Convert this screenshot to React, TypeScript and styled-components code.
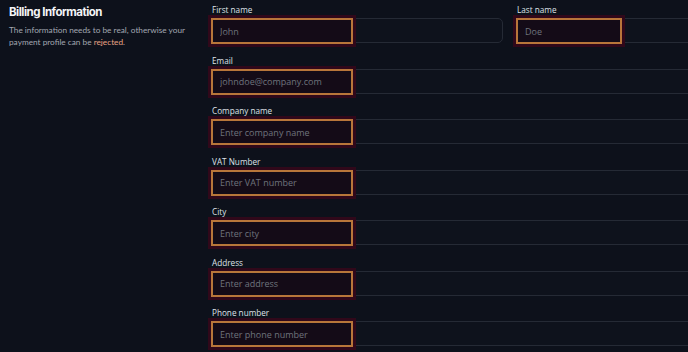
import React from 'react';
import styled, { createGlobalStyle } from 'styled-components';

const GlobalStyle = createGlobalStyle`
  html, body {
    margin: 0;
    padding: 0;
    background: #0d111b;
    overflow: hidden;
  }
  body {
    font-family: Inter, "Noto Sans", sans-serif;
    color: #e7e9ee;
  }
`;

const Page = styled.div`
  display: grid;
  grid-template-columns: 211px 597px;
  width: 808px;
  height: 352px;
`;

const Intro = styled.div`
  padding: 5px 0 0 9px;
`;

const Title = styled.h2`
  margin: 0 0 4px;
  font-size: 11.5px;
  line-height: 15px;
  font-weight: 700;
  letter-spacing: -0.5px;
  color: #f4f5f7;
`;

const Description = styled.p`
  margin: 0;
  width: 180px;
  font-family: Lato, "Open Sans", sans-serif;
  font-size: 8.25px;
  line-height: 12px;
  color: #a2a7b1;
`;

const Warning = styled.span`
  color: #e9a283;
`;

const Form = styled.div`
  display: flex;
  flex-direction: column;
  gap: 11.5px;
  padding-top: 4px;
`;

const Row = styled.div`
  display: grid;
  grid-template-columns: 1fr 1fr;
  column-gap: 13px;
`;

const Field = styled.label<{ $full?: boolean }>`
  display: flex;
  flex-direction: column;
  gap: 3px;
  grid-column: ${({ $full }) => ($full ? '1 / -1' : 'auto')};
`;

const Label = styled.span`
  padding-left: 1px;
  font-family: "Open Sans", Inter, sans-serif;
  font-size: 8.2px;
  line-height: 11px;
  font-weight: 500;
  color: #dfe2e8;
`;

const Box = styled.div`
  position: relative;
  height: 25px;
  border: 1px solid #252a35;
  border-radius: 5px;
  background: #0e121c;
  box-sizing: border-box;
`;

const Input = styled.input<{ $width: number }>`
  position: absolute;
  left: -1px;
  top: -1px;
  width: ${({ $width }) => $width}px;
  height: 26px;
  box-sizing: border-box;
  padding: 0 0 0 7px;
  border: 2px solid #b8763a;
  outline: 3px solid #30081a;
  background: #140b17;
  font-family: "Open Sans", Inter, sans-serif;
  font-size: 9px;
  color: #737984;
  &::placeholder {
    color: #6f747d;
  }
`;

const fields = [
  { label: 'Email', placeholder: 'johndoe@company.com' },
  { label: 'Company name', placeholder: 'Enter company name' },
  { label: 'VAT Number', placeholder: 'Enter VAT number' },
  { label: 'City', placeholder: 'Enter city' },
  { label: 'Address', placeholder: 'Enter address' },
  { label: 'Phone number', placeholder: 'Enter phone number' },
];

const App: React.FC = () => (
  <>
    <GlobalStyle />
    <Page>
      <Intro>
        <Title>Billing Information</Title>
        <Description>
          The information needs to be real, otherwise your payment profile can be <Warning>rejected</Warning>.
        </Description>
      </Intro>
      <Form>
        <Row>
          <Field>
            <Label>First name</Label>
            <Box>
              <Input $width={142} placeholder="John" />
            </Box>
          </Field>
          <Field>
            <Label>Last name</Label>
            <Box>
              <Input $width={106} placeholder="Doe" />
            </Box>
          </Field>
        </Row>
        {fields.map((f) => (
          <Row key={f.label}>
            <Field $full>
              <Label>{f.label}</Label>
              <Box>
                <Input $width={142} placeholder={f.placeholder} />
              </Box>
            </Field>
          </Row>
        ))}
      </Form>
    </Page>
  </>
);

export default App;
